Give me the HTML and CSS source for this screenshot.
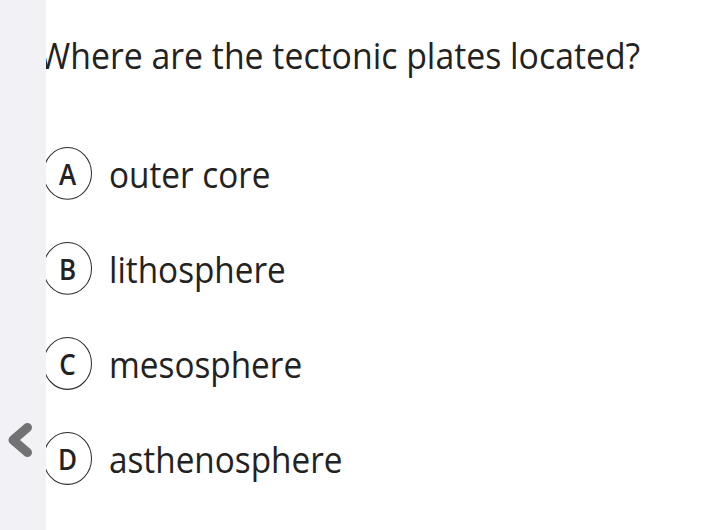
FILE: index.html
```html
<!DOCTYPE html>
<html>
<head>
<meta charset="utf-8">
<link rel="stylesheet" href="styles.css">
</head>
<body>
<div class="page">
  <h1 class="question">Where are the tectonic plates located?</h1>
  <ul class="options">
    <li class="option"><span class="letter">A</span><span class="label">outer core</span></li>
    <li class="option"><span class="letter">B</span><span class="label">lithosphere</span></li>
    <li class="option"><span class="letter">C</span><span class="label">mesosphere</span></li>
    <li class="option"><span class="letter">D</span><span class="label">asthenosphere</span></li>
  </ul>
</div>
<div class="sidebar">
  <svg class="chev" width="36" height="40" viewBox="0 0 36 40"><polyline points="27.5,7.5 13,20 27.5,32.5" fill="none" stroke="#727275" stroke-width="9" stroke-linecap="round" stroke-linejoin="round"/></svg>
</div>
</body>
</html>
```
FILE: styles.css
```css
html, body { margin: 0; padding: 0; background: #fff; }
body { width: 717px; height: 530px; overflow: hidden; font-family: "Open Sans", sans-serif; color: #222; position: relative; }
.page { padding: 28px 0 0 39px; transform: scale(1, 1.08); transform-origin: 0 0; }
.question { margin: 0; font-size: 33.8px; font-weight: 400; line-height: 46px; }
.options { list-style: none; margin: 62px 0 0 4px; padding: 0; display: flex; flex-direction: column; gap: 39px; }
.option { display: flex; align-items: center; height: 49px; }
.letter { width: 47px; height: 47px; border: 1.5px solid #2a2a2a; border-radius: 50%; display: flex; align-items: center; justify-content: center; font-size: 26px; font-weight: 600; flex: none; }
.label { margin-left: 17px; font-size: 33.3px; line-height: 46px; }
.sidebar { position: absolute; left: 0; top: 0; width: 46px; height: 530px; background: #f2f2f6; }
.chev { position: absolute; left: 0; top: 420px; display: block; }
```
